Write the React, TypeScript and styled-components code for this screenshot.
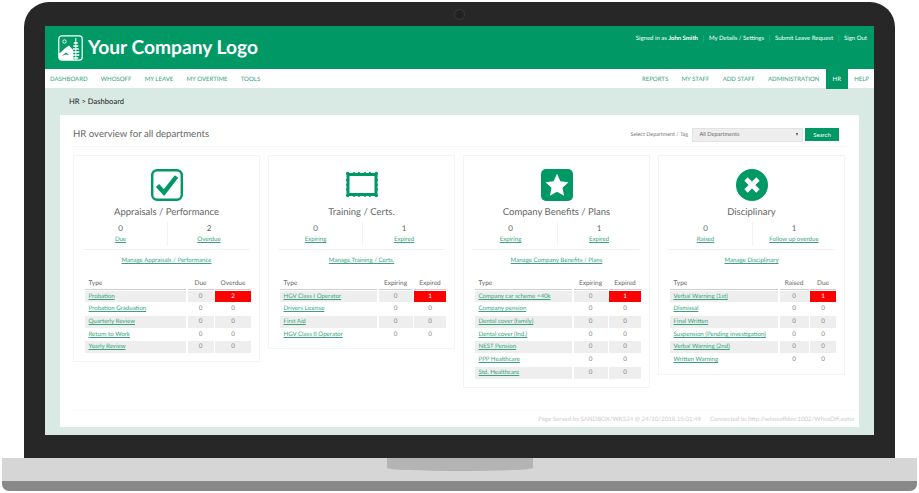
import React from "react";
import styled, { createGlobalStyle } from "styled-components";

const GREEN = "#009966";
const LINK = "#37a47d";

const GlobalStyle = createGlobalStyle`
  html, body {
    margin: 0;
    padding: 0;
    background: #ffffff;
    font-family: "Lato", "Liberation Sans", sans-serif;
    text-rendering: geometricPrecision;
  }
  * {
    box-sizing: border-box;
  }
`;

const Laptop = styled.div`
  width: 919px;
  height: 493px;
  padding: 2px 2px 2px;
  display: flex;
  flex-direction: column;
  align-items: center;
`;

const Lid = styled.div`
  position: relative;
  width: 871px;
  height: 456px;
  padding: 24px 21px 23px;
  background: #272727;
  border-radius: 25px 25px 0 0;
`;

const Camera = styled.div`
  position: absolute;
  top: 7px;
  left: 430px;
  width: 11px;
  height: 11px;
  border-radius: 50%;
  border: 1px solid #3a3a3a;
  background: #222222;
`;

const Base = styled.div`
  width: 915px;
  height: 33px;
  background: #d6d6d6;
  border-bottom: 10px solid #888888;
  border-radius: 0 0 7px 7px;
  display: flex;
  justify-content: center;
`;

const Notch = styled.div`
  width: 146px;
  height: 13px;
  background: #b4b4b4;
  border-radius: 0 0 50% 50% / 0 0 3px 3px;
`;

const Screen = styled.div`
  height: 100%;
  display: flex;
  flex-direction: column;
  background: #d8eae3;
`;

const Header = styled.header`
  height: 43px;
  flex: none;
  padding: 8px 7px 0 13px;
  background: ${GREEN};
  display: flex;
  justify-content: space-between;
  align-items: flex-start;
`;

const Brand = styled.div`
  display: flex;
  align-items: center;
  gap: 5px;
  margin-top: 1px;
  color: #ffffff;
  font-weight: 700;
  font-size: 19.2px;
  line-height: 26px;
`;

const TopLinks = styled.div`
  display: flex;
  align-items: center;
  margin-top: -1px;
  height: 10px;
  color: #ffffff;
  font-size: 6px;
`;

const TopLink = styled.span`
  padding: 0 5px;
  white-space: nowrap;
  border-left: 1px solid ${(p: { $first?: boolean }) => (p.$first ? "transparent" : "rgba(255,255,255,0.12)")};
  &:last-child {
    padding-right: 0;
  }
  b {
    font-weight: 700;
  }
`;

const Nav = styled.nav`
  height: 19px;
  flex: none;
  background: #ffffff;
  display: flex;
  justify-content: space-between;
`;

const NavGroup = styled.div`
  display: flex;
`;

const NavItem = styled.a<{ $active?: boolean }>`
  display: flex;
  align-items: center;
  padding: 1px 6.6px 0;
  height: ${(p) => (p.$active ? "20px" : "19px")};
  font-size: 6.05px;
  text-transform: uppercase;
  white-space: nowrap;
  color: ${(p) => (p.$active ? "#ffffff" : LINK)};
  background: ${(p) => (p.$active ? GREEN : "transparent")};
  &:first-child {
    padding-left: 5px;
  }
  &:last-child {
    padding-right: 5px;
  }
`;

const Page = styled.main`
  flex: 1;
  display: flex;
  flex-direction: column;
  padding: 0 15px 8px;
`;

const Breadcrumb = styled.div`
  height: 27px;
  flex: none;
  padding: 0 9px 2px;
  display: flex;
  align-items: center;
  font-size: 7.6px;
  color: #222222;
`;

const Panel = styled.section`
  flex: 1;
  display: flex;
  flex-direction: column;
  background: #ffffff;
  padding: 0 13px;
`;

const PanelHead = styled.div`
  height: 32px;
  flex: none;
  padding: 8px 7px 0 0;
  display: flex;
  justify-content: space-between;
  align-items: center;
  border-bottom: 1px solid #f6f6f6;
`;

const PanelTitle = styled.h2`
  margin: 0;
  font-size: 9.6px;
  font-weight: 400;
  color: #666666;
`;

const Filter = styled.div`
  display: flex;
  align-items: center;
`;

const FilterLabel = styled.span`
  font-size: 5.4px;
  color: #777777;
  margin-right: 4px;
`;

const SelectBox = styled.div`
  width: 111px;
  height: 14px;
  padding: 0 4px 0 6.5px;
  background: #eeeeee;
  border: 1px solid #e2e2e2;
  display: flex;
  justify-content: space-between;
  align-items: center;
  font-size: 5.6px;
  color: #666666;
`;

const Caret = styled.span`
  width: 0;
  height: 0;
  border-left: 1.5px solid transparent;
  border-right: 1.5px solid transparent;
  border-top: 3px solid #444444;
`;

const SearchButton = styled.button`
  width: 34px;
  height: 13px;
  margin-left: 2px;
  padding: 0;
  border: 0;
  background: ${GREEN};
  color: #ffffff;
  font-family: inherit;
  font-size: 6px;
`;

const Cards = styled.div`
  flex: 1;
  padding-top: 8px;
  display: grid;
  grid-template-columns: repeat(4, 187px);
  gap: 8px;
  align-items: start;
`;

const Card = styled.article`
  padding: 13px 9px 7px;
  border: 1px solid #f4f4f4;
  display: flex;
  flex-direction: column;
  align-items: stretch;
`;

const CardIcon = styled.div`
  height: 32px;
  display: flex;
  justify-content: center;
`;

const CardTitle = styled.h3`
  margin: 5px 0 0;
  height: 14px;
  font-size: 9.5px;
  line-height: 14px;
  font-weight: 400;
  text-align: center;
  color: #666666;
`;

const Stats = styled.div`
  margin: 2px 0 0 -9px;
  display: grid;
  grid-template-columns: 93px 1fr;
  height: 24px;
`;

const Stat = styled.div<{ $split?: boolean }>`
  text-align: center;
  font-size: 6.2px;
  line-height: 12px;
  border-left: ${(p) => (p.$split ? "1px solid #f2f2f2" : "0")};
`;

const StatValue = styled.div`
  font-size: 8px;
  color: #666666;
`;

const TextLink = styled.a`
  font-size: 6.1px;
  color: ${LINK};
  text-decoration: underline;
  white-space: nowrap;
`;

const Manage = styled.div`
  margin-top: 3px;
  padding-top: 5px;
  height: 20px;
  font-size: 6.1px;
  line-height: 12px;
  text-align: center;
  border-top: 1px solid #f2f2f2;
`;

const Table = styled.div`
  margin: 9px 2px 0;
`;

const Row = styled.div<{ $cols: string }>`
  display: grid;
  grid-template-columns: ${(p) => p.$cols};
  column-gap: 1.5px;
  height: 12.7px;
  padding-bottom: 1px;
`;

const HeadCell = styled.div<{ $left?: boolean }>`
  height: 12px;
  margin-bottom: 1px;
  padding-left: ${(p) => (p.$left ? "3.5px" : "0")};
  border-bottom: 1px solid #cfcfcf;
  font-size: 6.5px;
  line-height: 11px;
  color: #666666;
  text-align: ${(p) => (p.$left ? "left" : "center")};
`;

const NameCell = styled.div<{ $shade: boolean }>`
  padding-left: 3.5px;
  background: ${(p) => (p.$shade ? "#eeeeee" : "transparent")};
  font-size: 6.1px;
  line-height: 11.7px;
  overflow: hidden;
`;

const NumCell = styled.div<{ $shade: boolean; $alert?: boolean }>`
  background: ${(p) => (p.$alert ? "#ff0000" : p.$shade ? "#eeeeee" : "transparent")};
  color: ${(p) => (p.$alert ? "#ffffff" : "#888888")};
  font-size: 6.3px;
  line-height: 11.7px;
  text-align: center;
`;

const PageFooter = styled.footer`
  height: 17px;
  flex: none;
  margin: 0 -8px 0 0;
  display: flex;
  justify-content: flex-end;
  align-items: center;
  gap: 9px;
  border-top: 1px solid #fafafa;
  font-size: 6.1px;
  color: #cccccc;
`;

function LogoMark() {
  return (
    <svg width="25" height="26" viewBox="0 0 25 26" fill="none">
      <rect x="0.8" y="0.8" width="23.4" height="24.4" rx="3" stroke="#fff" strokeWidth="1.2" />
      <circle cx="6.500" cy="6.500" r="1.700" stroke="#fff" strokeWidth="0.9" />
      <path d="M1 18.500 Q3 17.500 5 15 Q8 12.500 11 10.500 L15 15 L15.500 25 L4 25 Q1 25 1 22 Z" fill="#fff" />
      <path d="M3.500 21 L8 17.500 L11 20 L7.500 19.500 Z" fill="#009966" />
      <path d="M17.800 3 L17.800 25" stroke="#fff" strokeWidth="1" />
      <path
        d="M15.800 8 L19.800 8 M15.300 11 L20.300 11 M14.800 14 L20.800 14 M14.300 17 L21.300 17 M14.300 20 L21.300 20 M15.300 23 L20.300 23"
        stroke="#fff"
        strokeWidth="1.500"
      />
    </svg>
  );
}

function CheckIcon() {
  return (
    <svg width="32" height="32" viewBox="0 0 32 32" fill="none">
      <rect x="1.200" y="1.200" width="29.600" height="29.600" rx="5" stroke={GREEN} strokeWidth="2.400" />
      <path d="M6.500 16.500 L13 23.500 L25.500 7.500" stroke={GREEN} strokeWidth="4.400" />
    </svg>
  );
}

const SCALLOPS: [number, number, number][] = [
  ...[
    [1.7, 1.7],
    [8, 1.3],
    [13, 1.3],
    [19, 1.3],
    [24, 1.3],
    [30.3, 1.7],
  ].flatMap(([x, r]): [number, number, number][] => [
    [x, 4.4, r],
    [x, 26.6, r],
  ]),
  ...[11, 16, 20.5].flatMap((y): [number, number, number][] => [
    [1.2, y, 1.2],
    [30.8, y, 1.2],
  ]),
];

function CertIcon() {
  return (
    <svg width="32" height="32" viewBox="0 0 32 32" fill="none">
      <rect x="2" y="5.500" width="28" height="20" stroke={GREEN} strokeWidth="3" />
      {SCALLOPS.map(([cx, cy, r]) => (
        <circle key={`${cx}-${cy}`} cx={cx} cy={cy} r={r} fill={GREEN} />
      ))}
    </svg>
  );
}

function StarIcon() {
  return (
    <svg width="32" height="32" viewBox="0 0 32 32">
      <rect width="32" height="32" rx="5" fill={GREEN} />
      <path
        d="M16 4.800 L19.400 12.300 L27.500 13.200 L21.500 18.700 L23.100 26.800 L16 22.700 L8.900 26.800 L10.500 18.700 L4.500 13.200 L12.600 12.300 Z"
        fill="#fff"
      />
    </svg>
  );
}

function CrossIcon() {
  return (
    <svg width="32" height="32" viewBox="0 0 32 32">
      <circle cx="16" cy="16" r="16" fill={GREEN} />
      <path d="M10 10 L22 22 M22 10 L10 22" stroke="#fff" strokeWidth="4.600" />
    </svg>
  );
}

interface Item {
  name: string;
  a: number;
  b: number;
}

interface Section {
  icon: React.ReactNode;
  title: string;
  labelA: string;
  labelB: string;
  totalA: number;
  totalB: number;
  manage: string;
  headA: string;
  headB: string;
  cols: string;
  items: Item[];
}

const zero = (name: string): Item => ({ name, a: 0, b: 0 });

const SECTIONS: Section[] = [
  {
    icon: <CheckIcon />,
    title: "Appraisals / Performance",
    labelA: "Due",
    labelB: "Overdue",
    totalA: 0,
    totalB: 2,
    manage: "Manage Appraisals / Performance",
    headA: "Due",
    headB: "Overdue",
    cols: "101px 26px 36px",
    items: [
      { name: "Probation", a: 0, b: 2 },
      zero("Probation Graduation"),
      zero("Quarterly Review"),
      zero("Return to Work"),
      zero("Yearly Review"),
    ],
  },
  {
    icon: <CertIcon />,
    title: "Training / Certs.",
    labelA: "Expiring",
    labelB: "Expired",
    totalA: 0,
    totalB: 1,
    manage: "Manage Training / Certs.",
    headA: "Expiring",
    headB: "Expired",
    cols: "97px 34px 32px",
    items: [
      { name: "HGV Class I Operator", a: 0, b: 1 },
      zero("Drivers License"),
      zero("First Aid"),
      zero("HGV Class II Operator"),
    ],
  },
  {
    icon: <StarIcon />,
    title: "Company Benefits / Plans",
    labelA: "Expiring",
    labelB: "Expired",
    totalA: 0,
    totalB: 1,
    manage: "Manage Company Benefits / Plans",
    headA: "Expiring",
    headB: "Expired",
    cols: "97px 34px 32px",
    items: [
      { name: "Company car scheme <40k", a: 0, b: 1 },
      zero("Company pension"),
      zero("Dental cover (family)"),
      zero("Dental cover (Ind.)"),
      zero("NEST Pension"),
      zero("PPP Healthcare"),
      zero("Std. Healthcare"),
    ],
  },
  {
    icon: <CrossIcon />,
    title: "Disciplinary",
    labelA: "Raised",
    labelB: "Follow up overdue",
    totalA: 0,
    totalB: 1,
    manage: "Manage Disciplinary",
    headA: "Raised",
    headB: "Due",
    cols: "108px 29px 26px",
    items: [
      { name: "Verbal Warning (1st)", a: 0, b: 1 },
      zero("Dismissal"),
      zero("Final Written"),
      zero("Suspension (Pending investigation)"),
      zero("Verbal Warning (2nd)"),
      zero("Written Warning"),
    ],
  },
];

const LEFT_NAV = ["Dashboard", "WhosOff", "My Leave", "My Overtime", "Tools"];
const RIGHT_NAV = ["Reports", "My Staff", "Add Staff", "Administration", "HR", "Help"];

function OverviewCard({ section }: { section: Section }) {
  return (
    <Card>
      <CardIcon>{section.icon}</CardIcon>
      <CardTitle>{section.title}</CardTitle>
      <Stats>
        <Stat>
          <StatValue>{section.totalA}</StatValue>
          <TextLink>{section.labelA}</TextLink>
        </Stat>
        <Stat $split>
          <StatValue>{section.totalB}</StatValue>
          <TextLink>{section.labelB}</TextLink>
        </Stat>
      </Stats>
      <Manage>
        <TextLink>{section.manage}</TextLink>
      </Manage>
      <Table>
        <Row $cols={section.cols}>
          <HeadCell $left>Type</HeadCell>
          <HeadCell>{section.headA}</HeadCell>
          <HeadCell>{section.headB}</HeadCell>
        </Row>
        {section.items.map((item, i) => (
          <Row $cols={section.cols} key={item.name}>
            <NameCell $shade={i % 2 === 0}>
              <TextLink>{item.name}</TextLink>
            </NameCell>
            <NumCell $shade={i % 2 === 0}>{item.a}</NumCell>
            <NumCell $shade={i % 2 === 0} $alert={item.b > 0}>
              {item.b}
            </NumCell>
          </Row>
        ))}
      </Table>
    </Card>
  );
}

export default function App() {
  return (
    <>
      <GlobalStyle />
      <Laptop>
        <Lid>
          <Camera />
          <Screen>
            <Header>
              <Brand>
                <LogoMark />
                Your Company Logo
              </Brand>
              <TopLinks>
                <TopLink $first>
                  Signed in as <b>John Smith</b>
                </TopLink>
                <TopLink>My Details / Settings</TopLink>
                <TopLink>Submit Leave Request</TopLink>
                <TopLink>Sign Out</TopLink>
              </TopLinks>
            </Header>
            <Nav>
              <NavGroup>
                {LEFT_NAV.map((n) => (
                  <NavItem key={n}>{n}</NavItem>
                ))}
              </NavGroup>
              <NavGroup>
                {RIGHT_NAV.map((n) => (
                  <NavItem key={n} $active={n === "HR"}>
                    {n}
                  </NavItem>
                ))}
              </NavGroup>
            </Nav>
            <Page>
              <Breadcrumb>HR &gt; Dashboard</Breadcrumb>
              <Panel>
                <PanelHead>
                  <PanelTitle>HR overview for all departments</PanelTitle>
                  <Filter>
                    <FilterLabel>Select Department / Tag</FilterLabel>
                    <SelectBox>
                      All Departments
                      <Caret />
                    </SelectBox>
                    <SearchButton>Search</SearchButton>
                  </Filter>
                </PanelHead>
                <Cards>
                  {SECTIONS.map((s) => (
                    <OverviewCard key={s.title} section={s} />
                  ))}
                </Cards>
                <PageFooter>
                  <span>Page Served by SANDBOX/WKS24 @ 24/10/2018 15:01:49</span>
                  <span>Connected to http://whosoffdev:1002/WhosOff.asmx</span>
                </PageFooter>
              </Panel>
            </Page>
          </Screen>
        </Lid>
        <Base>
          <Notch />
        </Base>
      </Laptop>
    </>
  );
}
